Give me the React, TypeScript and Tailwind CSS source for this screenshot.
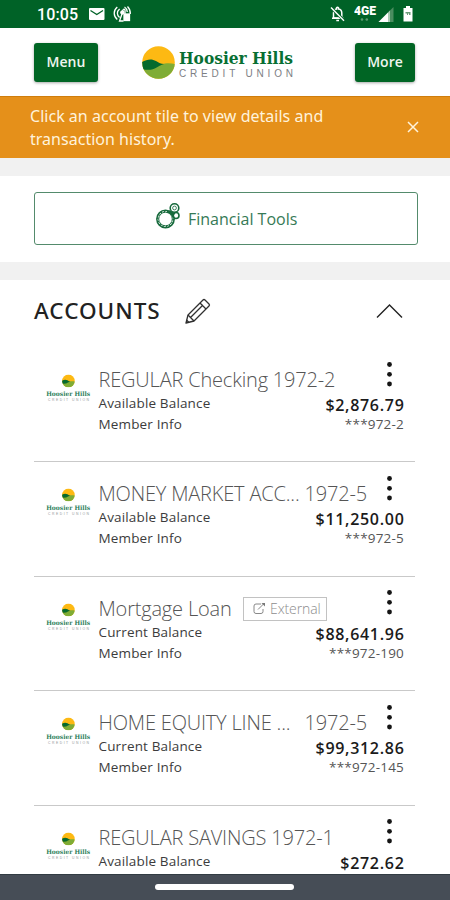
import React from "react";

type Account = {
  name: string;
  suffix?: string;
  external?: boolean;
  nameWidth: string;
  label: string;
  amount: string;
  member?: string;
};

const accounts: Account[] = [
  { name: "REGULAR Checking 1972-2", nameWidth: "", label: "Available Balance", amount: "$2,876.79", member: "***972-2" },
  { name: "MONEY MARKET ACC...", suffix: "1972-5", nameWidth: "w-[206px]", label: "Available Balance", amount: "$11,250.00", member: "***972-5" },
  { name: "Mortgage Loan", external: true, nameWidth: "w-[144.500px]", label: "Current Balance", amount: "$88,641.96", member: "***972-190" },
  { name: "HOME EQUITY LINE ...", suffix: "1972-5", nameWidth: "w-[206px]", label: "Current Balance", amount: "$99,312.86", member: "***972-145" },
  { name: "REGULAR SAVINGS 1972-1", nameWidth: "", label: "Available Balance", amount: "$272.62" },
];

function Emblem({ id }: { id: string }) {
  return (
    <>
      <clipPath id={id}><circle cx="16.5" cy="16.5" r="16.3" /></clipPath>
      <g clipPath={`url(#${id})`}>
        <rect width="33" height="33" fill="#fdb913" />
        <path d="M0 22C8 25 13 21 19 18.500C24 17 28 17 33 18V33H0Z" fill="#7fac35" />
        <path d="M0 16C5 13 10 12.500 14 15C17 17 19 18 22 18C15 20 12 26 0 23Z" fill="#056a2d" />
      </g>
    </>
  );
}

function HeaderLogo() {
  return (
    <svg className="mr-[17px] mt-[2px] overflow-visible" width="152" height="34" viewBox="0 0 152 34">
      <Emblem id="emblem-header" />
      <text x="37" y="17.500" textLength="114" lengthAdjust="spacingAndGlyphs" fontFamily="DejaVu Serif, serif" fontWeight="700" fontSize="17.500" fill="#086f33">Hoosier Hills</text>
      <text x="37" y="31" textLength="114" fontFamily="Liberation Sans, sans-serif" fontSize="10" fill="#7d8084">CREDIT UNION</text>
    </svg>
  );
}

function TileLogo({ id }: { id: string }) {
  return (
    <svg className="overflow-visible" width="44" height="28" viewBox="0 0 44 28">
      <g transform="translate(15 -0.5) scale(.39)"><Emblem id={id} /></g>
      <text x="-0.800" y="21" textLength="44" lengthAdjust="spacingAndGlyphs" fontFamily="DejaVu Serif, serif" fontWeight="700" fontSize="6.300" fill="#2d805b">Hoosier Hills</text>
      <text x="1" y="26" textLength="41" fontFamily="Liberation Sans, sans-serif" fontSize="3.400" fill="#92979a">CREDIT UNION</text>
    </svg>
  );
}

function StatusBar() {
  return (
    <div className="flex h-7 shrink-0 items-center justify-between bg-[#006227] pl-[37px] pr-[37px] text-white">
      <div className="flex items-center">
        <span className="w-[52px] pt-px font-[Roboto] text-[16px] font-medium leading-7 tracking-[0.1px]">10:05</span>
        <svg width="16" height="14" viewBox="0 0 16 14">
          <rect x="0" y="1" width="15.5" height="12" rx="1" fill="#fff" />
          <path d="M1.5 3.5L7.8 7.5L14 3.5" fill="none" stroke="#006227" strokeWidth="1.3" />
        </svg>
        <svg className="ml-2" width="19" height="18" viewBox="0 0 19 18" fill="none" stroke="#fff" strokeWidth="1.3">
          <path d="M4.300 2C.2 5.500.2 11 4.300 14.500M6.600 4C3.600 6.500 3.600 10 6.600 12.500M11.500 2Q14 3.500 14.300 7M14.500 1.500Q17.500 4.500 17.300 9" />
          <circle cx="9.300" cy="7.500" r="1.500" fill="#fff" />
          <path d="M9 9L6.500 16H10.500" />
          <rect x="11" y="9" width="5.500" height="6.500" fill="#fff" />
          <path d="M9.500 6Q10.500 3 12 5V9" />
        </svg>
      </div>
      <div className="flex items-center">
        <svg width="16" height="18" viewBox="0 0 16 18">
          <path d="M3.500 13V8Q3.500 4.500 6.500 4V3Q7.500 1.500 8.500 3V4Q11.800 4.500 11.800 8V13Z" fill="none" stroke="#fff" strokeWidth="1.500" />
          <path d="M2 13.200H13.500M6.300 15.500H9" stroke="#fff" strokeWidth="1.600" />
          <path d="M1.500 3L14.500 16" stroke="#006227" strokeWidth="3" />
          <path d="M1 2.500L14 15.800" stroke="#fff" strokeWidth="1.400" />
        </svg>
        <svg className="ml-[8px]" width="41" height="20" viewBox="0 0 41 20">
          <text x="0" y="11" textLength="22" lengthAdjust="spacingAndGlyphs" fontFamily="Roboto, sans-serif" fontWeight="900" fontSize="12" fill="#fff">4GE</text>
          <circle cx="8" cy="15.500" r="1.300" fill="#5a9b70" /><circle cx="12.800" cy="15.500" r="1.300" fill="#5a9b70" />
          <path d="M24.500 18L39.500 3V18Z" fill="#4b8d60" />
          <path d="M24.500 18L34 8.500V18Z" fill="#fff" />
          <path d="M34 8.500L36 6.500V18H34Z" fill="#abcbb5" />
        </svg>
        <svg className="ml-[8px]" width="10" height="16" viewBox="0 0 10 16">
          <path d="M3 0H7V2H9.500V15.500H.5V2H3Z" fill="#fff" />
          <path d="M2.500 6H7.500V9H6V7.500H5V9H4V7.500H2.500Z" fill="#6a9b79" />
        </svg>
      </div>
    </div>
  );
}

function HeaderButton({ children, width }: { children: React.ReactNode; width: string }) {
  return (
    <button className={`${width} h-[39px] rounded-[3px] bg-[#006524] pb-[2px] font-['Open_Sans'] text-[14px] font-semibold text-[#eef5ef] shadow-[0_1px_3px_rgba(0,0,0,0.35)]`}>
      {children}
    </button>
  );
}

function AccountRow({ account, index }: { account: Account; index: number }) {
  return (
    <div className="flex h-[114.4px] shrink-0 border-b border-[#c9c9c9] pl-[13px]">
      <div className="w-[51.500px] pt-[27px]"><TileLogo id={`emblem-${index}`} /></div>
      <div className="flex grow flex-col pt-[18px]">
        <div className="flex h-7 items-center whitespace-nowrap text-[20px] font-light leading-7 tracking-[-0.180px] text-[#555]">
          <span className={account.nameWidth}>{account.name}</span>
          {account.suffix && <span>{account.suffix}</span>}
          {account.external && (
            <span className="flex h-6 w-[84px] items-center border border-[#c2c2c2] pl-[9px] text-[14px] leading-5 tracking-[-0.1px] text-[#8d8d8d]">
              <svg className="mr-[4px]" width="13" height="13" viewBox="0 0 13 13" fill="none" stroke="#888" strokeWidth="1">
                <path d="M8 2H3Q1 2 1 4V9.500Q1 11.500 3 11.500H8Q10 11.500 10 9.500V7M5 7.500L11 1.500" />
                <path d="M8.500 1H12V4.500Z" fill="#777" stroke="none" />
              </svg>
              External
            </span>
          )}
        </div>
        <div className="-mt-px flex h-[21px] justify-between pr-[11px]">
          <span className="text-[13.5px] leading-[21px] tracking-[0.15px] text-[#3c3c3c]">{account.label}</span>
          <span className="-mr-[0.500px] pt-[2px] text-[16px] font-semibold leading-[20px] tracking-[0.700px] text-[#1b1b1b]">{account.amount}</span>
        </div>
        {account.member && (
          <div className="flex h-[21px] justify-between pr-[11px] text-[13.5px] leading-[21px] tracking-[0.15px] text-[#3c3c3c]">
            <span>Member Info</span>
            <span className="tracking-[0.200px] text-[#555]">{account.member}</span>
          </div>
        )}
      </div>
      <div className="relative w-0">
        <svg className="absolute right-[22px] top-[12.500px]" width="7" height="27" viewBox="0 0 7 27" fill="#151515">
          <circle cx="3.500" cy="3.500" r="2.400" /><circle cx="3.500" cy="13.300" r="2.400" /><circle cx="3.500" cy="23" r="2.400" />
        </svg>
      </div>
    </div>
  );
}

export default function App() {
  return (
    <div className="flex h-[900px] w-[450px] flex-col overflow-hidden bg-white font-['Open_Sans',sans-serif]">
      <StatusBar />
      <header className="flex h-[68px] shrink-0 items-center justify-between pl-[34px] pr-[35px]">
        <HeaderButton width="w-16">Menu</HeaderButton>
        <HeaderLogo />
        <HeaderButton width="w-[60px]">More</HeaderButton>
      </header>
      <div className="flex h-[62px] shrink-0 items-center justify-between border-t border-[#cf7d0c] bg-[#e5901a] pb-px pl-[30px] pr-[31px] text-[#fff3dc]">
        <p className="w-[310px] pt-px font-['Noto_Sans'] text-[16px] leading-[23px] tracking-[0.02px]">Click an account tile to view details and transaction history.</p>
        <svg width="12" height="12" viewBox="0 0 12 12" stroke="#fff3dc" strokeWidth="1.500"><path d="M1 1L11 11M11 1L1 11" /></svg>
      </div>
      <div className="h-[18px] shrink-0 bg-[#f1f1f1]" />
      <div className="h-[86px] shrink-0 pl-[34px] pr-8 pt-4">
        <button className="flex h-[53px] w-full items-center rounded-[3px] border border-[#548b6c] pl-[120px] text-[16px] text-[#367a56]">
          <svg className="mb-[5px] mr-[7px]" width="26" height="28" viewBox="0 0 26 28" fill="none" stroke="#176a3c">
            <circle cx="10.500" cy="17" r="8.700" strokeWidth="1.500" />
            <circle cx="10.500" cy="17" r="6.800" strokeWidth="1" />
            <circle cx="10.500" cy="17" r="7.800" strokeWidth="1.600" strokeDasharray="1.300 2.200" />
            <circle cx="19.500" cy="6" r="4.300" strokeWidth="1.600" />
            <circle cx="19.500" cy="6" r="1.900" strokeWidth=".8" />
            <circle cx="21" cy="13.500" r="3" strokeWidth="1.600" />
            <path d="M12 10Q17 10 18 15M14 9L20 12" strokeWidth="1.800" />
          </svg>
          Financial Tools
        </button>
      </div>
      <div className="h-[18px] shrink-0 bg-[#f1f1f1]" />
      <main className="flex h-[594px] shrink-0 flex-col overflow-hidden pl-[34px] pr-[35px]">
        <div className="flex h-[68px] shrink-0 items-start justify-between pr-[12px] pt-[15px]">
          <div className="flex h-8 items-center">
            <h1 className="w-[149px] font-['Noto_Sans'] text-[22.500px] font-medium leading-8 tracking-[1px] text-[#222]">ACCOUNTS</h1>
            <svg className="mt-px" width="28" height="28" viewBox="0 0 28 28" fill="none" stroke="#303030" strokeWidth="1.300" strokeLinejoin="round">
              <path d="M3 25L5 17L20 2Q21 1 22 2L26 6Q27 7 26 8L11 23Z" />
              <path d="M5 17L11 23M17 5L23 11M7.500 19.500L20 7M3.500 22L6 24.500" />
            </svg>
          </div>
          <svg className="mt-[8px]" width="27" height="16" viewBox="0 0 27 16" fill="none" stroke="#222" strokeWidth="1.400"><path d="M1 14.500L13.500 2L26 14.500" /></svg>
        </div>
        {accounts.map((account, index) => <AccountRow key={account.name} account={account} index={index} />)}
      </main>
      <footer className="flex h-[26px] shrink-0 justify-center border-t border-[#323c43] bg-[#464d56] pt-[9px]">
        <div className="mr-[2px] h-[6px] w-[139px] rounded-full bg-white" />
      </footer>
    </div>
  );
}
